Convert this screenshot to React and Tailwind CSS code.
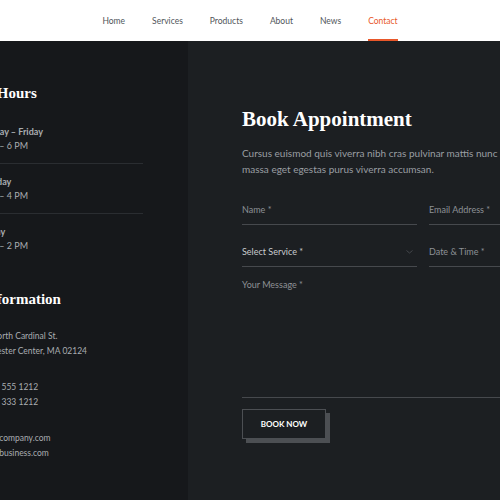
import React from 'react';

const navItems = ['Home', 'Services', 'Products', 'About', 'News', 'Contact'];

const hours = [
  { day: 'Monday – Friday', time: '10 AM – 6 PM' },
  { day: 'Saturday', time: '10 AM – 4 PM' },
  { day: 'Sunday', time: '10 AM – 2 PM' },
];

const contacts = [
  { lines: ['700 North Cardinal St.', 'Dorchester Center, MA 02124'], shift: '' },
  { lines: ['(800) 555 1212', '(800) 333 1212'], shift: 'ml-[6px]' },
  { lines: ['sales@company.com', 'hello@business.com'], shift: '' },
];

export default function App() {
  return (
    <div className="w-[500px] h-[500px] overflow-hidden bg-[#1c1f22] font-['Lato',sans-serif]">
      {/* Top nav */}
      <header className="h-[41px] bg-white flex justify-center gap-[27px]">
        {navItems.map((item) => (
          <a
            key={item}
            className={
              item === 'Contact'
                ? 'flex items-center text-[8.5px] text-[#e8572a] border-b-2 border-[#e8572a] pt-[4px]'
                : 'flex items-center text-[8.5px] text-[#50555a] border-b-2 border-transparent pt-[4px]'
            }
          >
            {item}
          </a>
        ))}
      </header>

      <div className="flex h-[459px]">
        {/* Sidebar (cut off on the left) */}
        <aside className="w-[188px] shrink-0 bg-[#16181b] overflow-hidden">
          <div className="-ml-[24px] w-[167px] pt-[42px]">
            <h3 className="-ml-[38px] whitespace-nowrap font-['Liberation_Serif',serif] font-bold text-[15px] text-white leading-[20px]">
              Opening Hours
            </h3>
            <div className="mt-[11px]">
              {hours.map((h, i) => (
                <div
                  key={h.day}
                  className={`pt-[11px] pb-[10px] text-[9px] leading-[14px] whitespace-nowrap ${i < hours.length - 1 ? 'border-b border-[#2a2d31]' : ''}`}
                >
                  <p className="font-bold text-[#a9adb1]">{h.day}</p>
                  <p className="-ml-[6px] text-[#a9adb1]">{h.time}</p>
                </div>
              ))}
            </div>

            <h3 className="mt-[26px] -ml-[48px] whitespace-nowrap font-['Liberation_Serif',serif] font-bold text-[15px] text-white leading-[20px]">
              Contact Information
            </h3>
            <div className="mt-[20px] -ml-[2px] space-y-[21px] text-[8.5px] leading-[15px] text-[#a9adb1] whitespace-nowrap">
              {contacts.map((c) => (
                <div key={c.lines[0]} className={c.shift}>
                  <p>{c.lines[0]}</p>
                  <p>{c.lines[1]}</p>
                </div>
              ))}
            </div>
          </div>
        </aside>

        {/* Booking form */}
        <main className="flex-1 pl-[54px] pt-[65px]">
          <div className="w-[362px]">
            <h2 className="font-['Liberation_Serif',serif] font-bold text-[21px] text-white leading-[26px]">
              Book Appointment
            </h2>
            <p className="mt-[13px] w-[272px] text-[10px] leading-[16px] text-[#9a9ea3]">
              Cursus euismod quis viverra nibh cras pulvinar mattis nunc massa eget egestas purus viverra accumsan.
            </p>

            <div className="mt-[26px] grid grid-cols-2 gap-x-[12px] text-[9px] leading-[14px]">
              <div className="border-b border-[#46494d] pb-[7px] text-[#8d9196]">Name *</div>
              <div className="border-b border-[#46494d] pb-[7px] text-[#8d9196]">Email Address *</div>
              <div className="mt-[20px] border-b border-[#46494d] pb-[7px] flex items-center justify-between text-[#c8cbce]">
                <span>Select Service *</span>
                <svg width="7" height="4" viewBox="0 0 7 4" className="mr-[4px]">
                  <path d="M0.5 0.5 L3.5 3 L6.5 0.5" fill="none" stroke="#44474b" strokeWidth="1" />
                </svg>
              </div>
              <div className="mt-[20px] border-b border-[#46494d] pb-[7px] text-[#8d9196]">Date &amp; Time *</div>
            </div>

            <div className="mt-[11px] h-[120px] border-b border-[#46494d] text-[9px] leading-[14px] text-[#8d9196]">
              Your Message *
            </div>

            <button className="mt-[11px] w-[84px] h-[30px] bg-[#1c1f22] border border-[#4c4f53] shadow-[4px_4px_0_#4c4f53] text-[8px] font-bold text-white">
              BOOK NOW
            </button>
          </div>
        </main>
      </div>
    </div>
  );
}
